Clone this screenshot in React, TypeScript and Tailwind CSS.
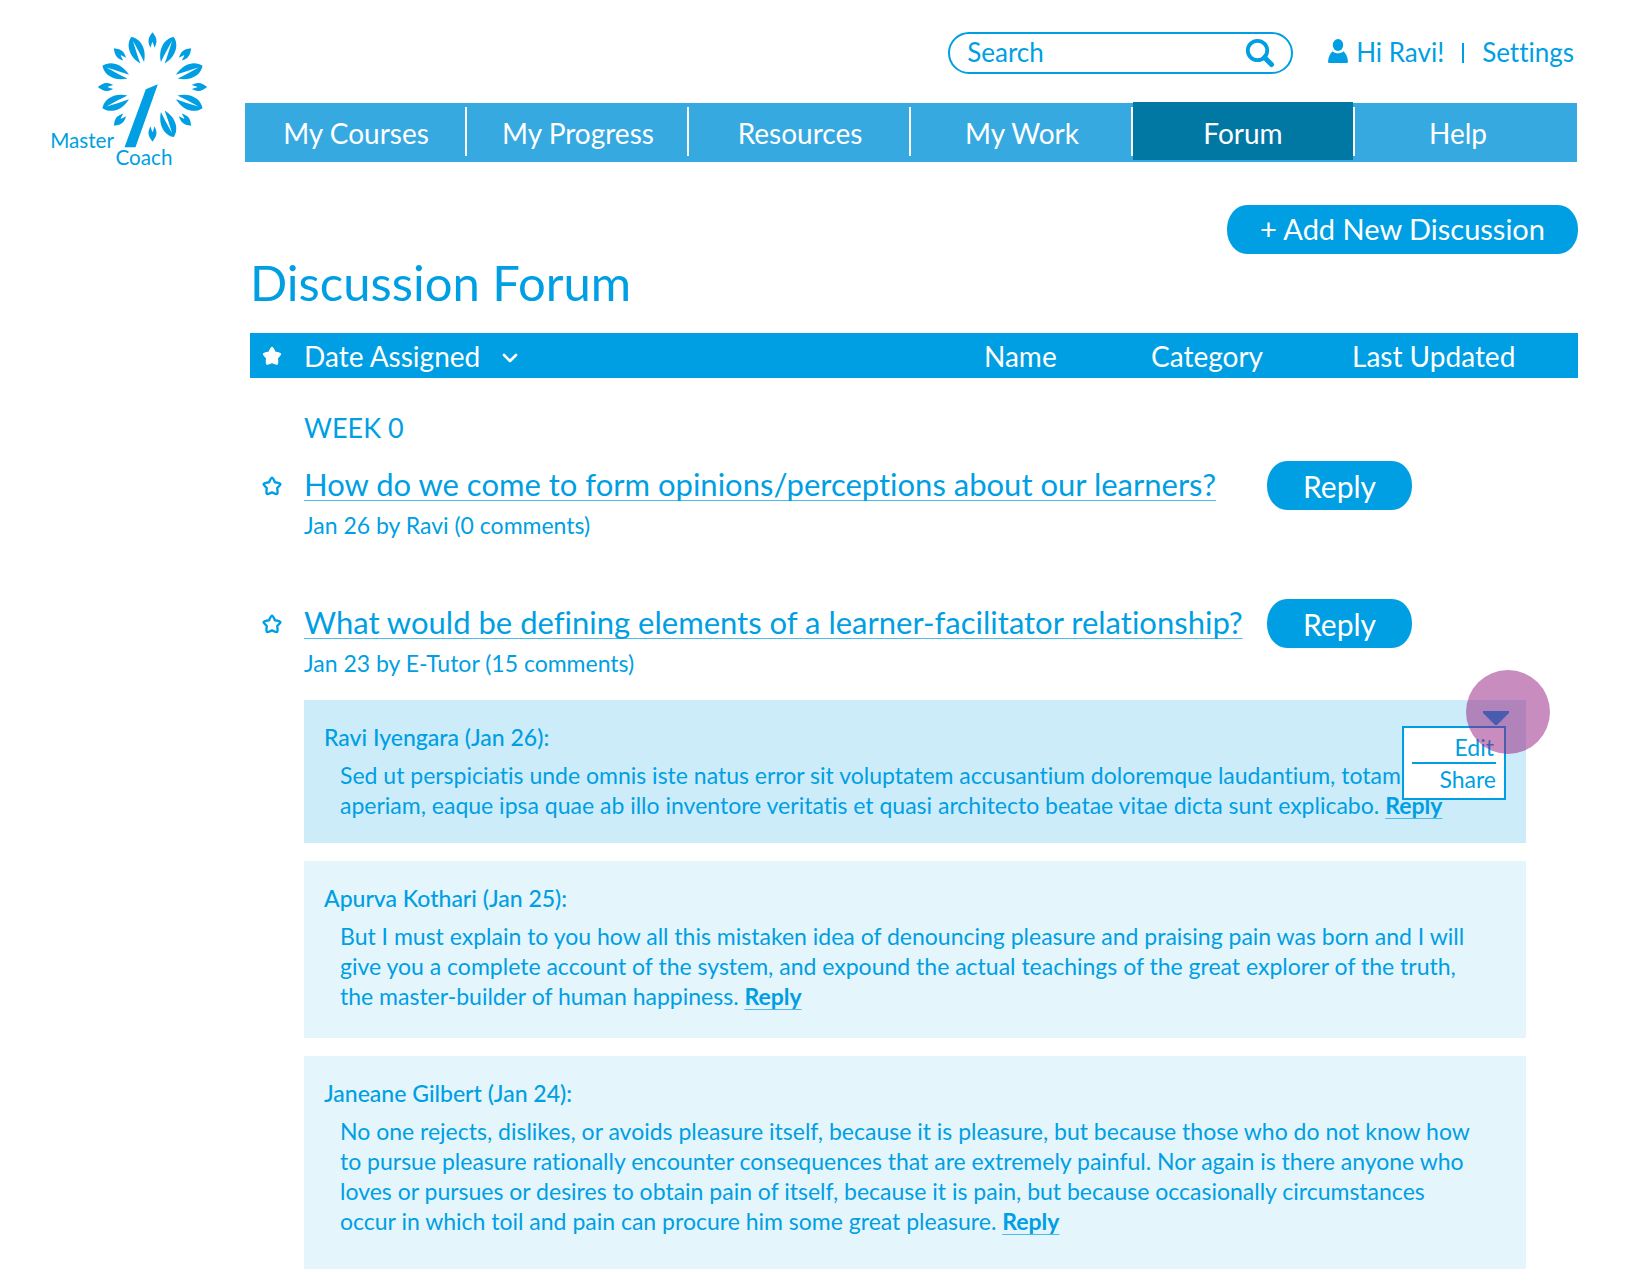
import React from "react";

const NAV = ["My Courses", "My Progress", "Resources", "My Work", "Forum", "Help"];

const PETAL_ANGLES = [0, 45, 90, 135, 180, 225, 270, 315];
const LEAF_ANGLES = [23, 67, 113, 157, 247, 293, 337];

function Logo() {
  return (
    <svg viewBox="0 0 500 420" className="-mt-[2px] h-[140px] w-[167px] shrink-0 fill-[#009fe3]" role="img" aria-label="Master Coach">
      <g transform="translate(307 171)">
        {PETAL_ANGLES.map((a) => (
          <path key={a} transform={`rotate(${a})`} d="M0-164C7-155 13-146 12-136C11-129 9-124 6-118L1-134H-1L-6-118C-9-124-11-129-12-136C-13-146-7-155 0-164Z" />
        ))}
        {LEAF_ANGLES.map((a) => (
          <path
            key={a}
            transform={`rotate(${a})`}
            d="M0-163C22-150 31-114 6-79C5-100 3-125 0-150C-3-125-5-100-6-79C-31-114-22-150 0-163Z"
          />
        ))}
      </g>
      <path d="M287 178L323 163L256 352H223Z" />
      <text x="0" y="353" fontSize="62">Master</text>
      <text x="196" y="404" fontSize="62">Coach</text>
    </svg>
  );
}

function Star({ filled = false }: { filled?: boolean }) {
  return (
    <svg viewBox="0 0 20 20" className="size-5 shrink-0" fill={filled ? "currentColor" : "none"} stroke="currentColor" strokeWidth={filled ? 1.5 : 2.4} strokeLinejoin="round">
      <path d="M10 1.6Q11 1.8 12.9 6.2Q17.8 6.9 18.4 8Q18.4 9 15.2 12.1Q16 16.8 15 18Q14 18.4 10 16.4Q6 18.4 5 18Q4 16.8 4.8 12.1Q1.6 9 1.6 8Q2.2 6.9 7.1 6.2Q9 1.8 10 1.6Z" />
    </svg>
  );
}

function Topic({ title, meta }: { title: string; meta: string }) {
  return (
    <div>
      <div className="flex items-center justify-between pr-[166px]">
        <div className="flex items-center">
          <button aria-label="Add to favourites" className="mr-[22px] ml-3">
            <Star />
          </button>
          <h3 className="pb-1 text-[31px] leading-9">
            <a href="#topic" className="underline decoration-[#4dbcec] decoration-1 underline-offset-4 [text-decoration-skip-ink:none]">
              {title}
            </a>
          </h3>
        </div>
        <button className="h-[49px] rounded-[20px/24px] bg-[#009fe3] px-9 text-[30px] leading-9 text-white">Reply</button>
      </div>
      <p className="pl-[54px] text-[23px] leading-[30px]">{meta}</p>
    </div>
  );
}

function ReplyLink() {
  return (
    <a href="#reply" className="font-bold underline decoration-[#4dbcec] decoration-1 underline-offset-4 [text-decoration-skip-ink:none]">
      Reply
    </a>
  );
}

function Comment({ author, lines, className, children }: { author: string; lines: string[]; className: string; children?: React.ReactNode }) {
  return (
    <article className={`relative pt-[22px] pl-5 text-[23px] leading-[30px] ${className}`}>
      <h4 className="font-medium">{author}:</h4>
      <p className="mt-2 pl-4 whitespace-nowrap">
        {lines.map((line, i) => (
          <React.Fragment key={line}>
            {i > 0 && <br />}
            {line}
          </React.Fragment>
        ))}{" "}
        <ReplyLink />
      </p>
      {children}
    </article>
  );
}

function CommentMenu() {
  return (
    <>
      <button aria-label="Comment options" aria-expanded="true" className="absolute top-[11px] right-[17px]">
        <svg viewBox="0 0 26 14" className="h-[14px] w-[26px] fill-[#009fe3]">
          <path d="M0 0H26V2L14 14H12L0 2Z" />
        </svg>
      </button>
      <div role="menu" className="absolute top-[26px] right-5 w-[104px] border-2 border-[#009fe3] bg-white px-2 pt-1 text-right text-[23px]">
        <button role="menuitem" className="block w-full border-b-2 border-[#009fe3] pr-[2px] text-right leading-[30px]">Edit</button>
        <button role="menuitem" className="block w-full pb-1 text-right leading-[30px]">Share</button>
      </div>
      <span className="pointer-events-none absolute -top-[30px] -right-6 size-[84px] rounded-full bg-[#93197d]/50" />
    </>
  );
}

export default function App() {
  return (
    <div className="min-h-screen bg-white pb-1 font-['Lato',sans-serif] text-[#009fe3] [font-variant-ligatures:none]">
      <header className="flex items-start justify-between pt-8 pr-[73px] pl-[50px]">
        <Logo />
        <div className="ml-7 flex-1">
          <div className="flex items-center justify-end pr-[3px]">
            <form className="flex h-[42px] w-[345px] items-center rounded-full border-2 border-[#009fe3] pr-4 pl-[17px]">
              <input aria-label="Search" placeholder="Search" className="min-w-0 flex-1 bg-transparent pb-[3px] text-[26px] leading-8 outline-none placeholder:text-[#009fe3] placeholder:opacity-100" />
              <button type="button" aria-label="Search">
                <svg viewBox="0 0 30 30" className="size-[30px]" fill="none" stroke="currentColor">
                  <circle cx="12.5" cy="12.5" r="9.7" strokeWidth="3.8" />
                  <path d="M19.5 19.5L26.5 26.5" strokeWidth="5" strokeLinecap="round" />
                </svg>
              </button>
            </form>
            <svg viewBox="0 0 20 24" className="mr-2 mb-1 ml-[35px] h-6 w-5 fill-[#009fe3]">
              <ellipse cx="10" cy="6" rx="5.2" ry="6" />
              <path d="M4.5 12.2C7.5 15 12.5 15 15.5 12.2C18 14.5 19.5 18 20 22.5Q20 24 18.5 24H1.5Q0 24 0 22.5C.5 18 2 14.5 4.5 12.2Z" />
            </svg>
            <a href="#profile" className="pb-[2px] text-[26px] leading-8">Hi Ravi!</a>
            <span className="mx-[18px] h-5 w-[2px] bg-[#009fe3]" />
            <a href="#settings" className="pb-[2px] text-[26px] leading-8">Settings</a>
          </div>
          <nav className="mt-[29px] grid h-[59px] grid-cols-6 bg-[#36a9e1] text-[28px] leading-9 text-white">
            {NAV.map((item, i) => (
              <div key={item} className="relative grid">
                <a
                  href="#nav"
                  aria-current={item === "Forum" ? "page" : undefined}
                  className={`flex items-center justify-center ${item === "Forum" ? "-mt-px mr-[2px] mb-[2px] bg-[#0078a3] pt-[3px]" : ""} ${item === "Help" ? "pr-4" : ""}`}
                >
                  {item}
                </a>
                {i < NAV.length - 1 && <span className="absolute top-1 right-0 h-[49px] w-[2px] bg-white" />}
              </div>
            ))}
          </nav>
        </div>
      </header>

      <main className="pr-[72px] pl-[250px]">
        <div className="mt-[35px] flex justify-end">
          <button className="h-[49px] rounded-[20px/24px] bg-[#009fe3] px-[33px] pb-px text-[29px] leading-9 text-white">+ Add New Discussion</button>
        </div>
        <h1 className="text-[49px] leading-[56px]">Discussion Forum</h1>

        <div className="mt-[23px] flex h-[45px] items-center bg-[#009fe3] pl-3 text-[28px] leading-9 text-white">
          <Star filled />
          <button className="ml-[22px] flex items-center">
            Date Assigned
            <svg viewBox="0 0 16 10" className="mt-1 ml-[22px] h-[10px] w-4" fill="none" stroke="currentColor" strokeWidth="2.6" strokeLinecap="round" strokeLinejoin="round">
              <path d="M2 2L8 8L14 2" />
            </svg>
          </button>
          <button className="ml-auto w-[167px] text-left">Name</button>
          <button className="w-[201px] text-left">Category</button>
          <button className="w-[226px] text-left">Last Updated</button>
        </div>

        <h2 className="mt-[34px] pl-[54px] text-[27px] leading-8">WEEK 0</h2>

        <section className="mt-[17px] flex flex-col gap-[59px]">
          <Topic title="How do we come to form opinions/perceptions about our learners?" meta="Jan 26 by Ravi (0 comments)" />
          <Topic title="What would be defining elements of a learner-facilitator relationship?" meta="Jan 23 by E-Tutor (15 comments)" />
        </section>

        <section className="mt-[22px] mr-[52px] ml-[54px] flex flex-col gap-[18px]">
          <Comment
            author="Ravi Iyengara (Jan 26)"
            className="bg-[#ccecf9] pb-[23px]"
            lines={[
              "Sed ut perspiciatis unde omnis iste natus error sit voluptatem accusantium doloremque laudantium, totam",
              "aperiam, eaque ipsa quae ab illo inventore veritatis et quasi architecto beatae vitae dicta sunt explicabo.",
            ]}
          >
            <CommentMenu />
          </Comment>
          <Comment
            author="Apurva Kothari (Jan 25)"
            className="bg-[#e4f5fc] pb-[27px]"
            lines={[
              "But I must explain to you how all this mistaken idea of denouncing pleasure and praising pain was born and I will",
              "give you a complete account of the system, and expound the actual teachings of the great explorer of the truth,",
              "the master-builder of human happiness.",
            ]}
          />
          <Comment
            author="Janeane Gilbert (Jan 24)"
            className="bg-[#e4f5fc] pb-[33px]"
            lines={[
              "No one rejects, dislikes, or avoids pleasure itself, because it is pleasure, but because those who do not know how",
              "to pursue pleasure rationally encounter consequences that are extremely painful. Nor again is there anyone who",
              "loves or pursues or desires to obtain pain of itself, because it is pain, but because occasionally circumstances",
              "occur in which toil and pain can procure him some great pleasure.",
            ]}
          />
        </section>
      </main>
    </div>
  );
}
